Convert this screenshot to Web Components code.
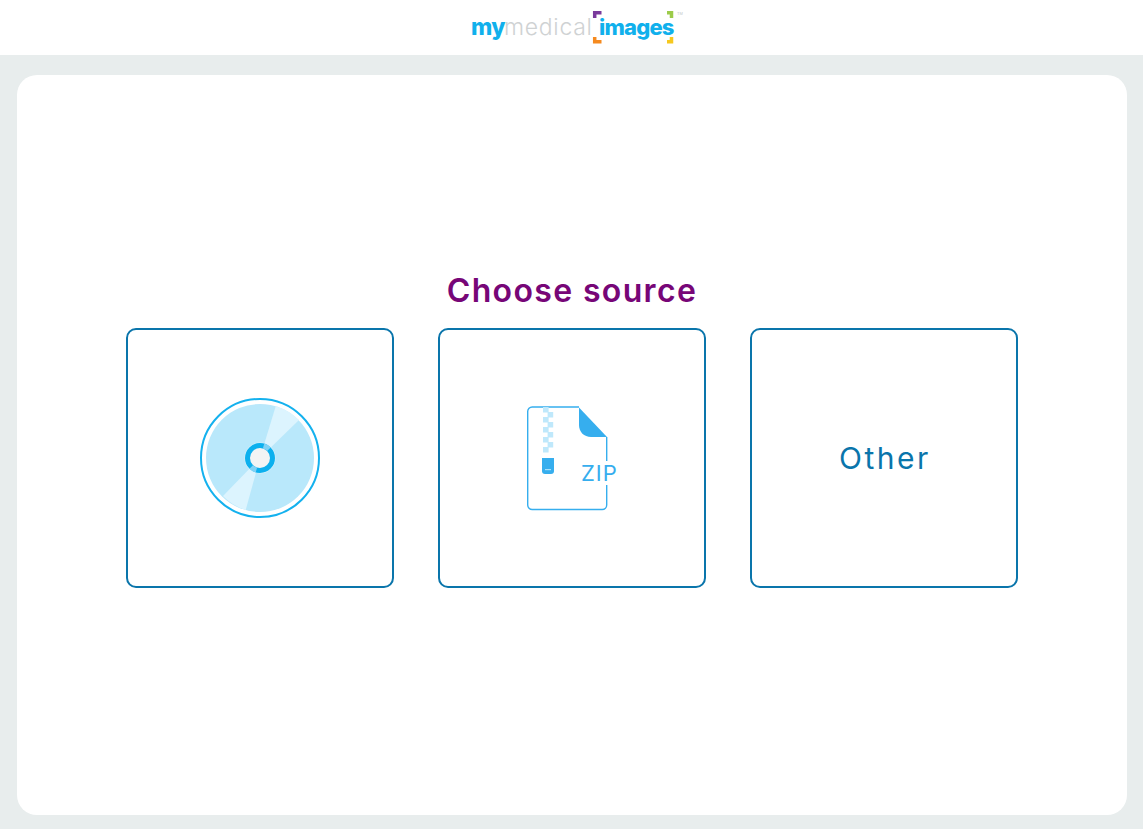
<!DOCTYPE html>
<html>
<head>
<meta charset="utf-8">
<title>Choose source</title>
<style>
  html, body { margin: 0; height: 100%; }
  body { background: #e8eded; font-family: Inter, "Liberation Sans", sans-serif; }
</style>
</head>
<body>
<app-shell>
  <site-logo slot="header"></site-logo>
  <source-panel heading="Choose source">
    <source-tile><disc-icon></disc-icon></source-tile>
    <source-tile><zip-icon></zip-icon></source-tile>
    <source-tile><tile-label>Other</tile-label></source-tile>
  </source-panel>
</app-shell>

<script>
customElements.define('app-shell', class extends HTMLElement {
    constructor() {
        super();
        this.attachShadow({mode: 'open'}).innerHTML = `
            <style>
                :host { display: flex; flex-direction: column; height: 829px; background: #e8eded; }
                header { height: 55px; background: #fff; display: flex; justify-content: center; flex: none; }
                main { flex: 1; display: flex; padding: 20px 16px 14px 17px; min-height: 0; }
            </style>
            <header><slot name="header"></slot></header>
            <main><slot></slot></main>
        `;
    }
});

customElements.define('site-logo', class extends HTMLElement {
    constructor() {
        super();
        this.attachShadow({mode: 'open'}).innerHTML = `
            <style>
                :host { display: block; position: relative; width: 219px; height: 55px; }
                .word { display: flex; align-items: baseline; padding: 13px 0 0 9px; font: 23px/28px Inter, sans-serif; }
                .my { color: #10b0ec; font-weight: 800; width: 33px; letter-spacing: -0.6px; }
                .medical { color: #cfd2d3; font-weight: 300; width: 87px; letter-spacing: 0.7px; }
                .images { color: #10b0ec; font-weight: 800; font-size: 22px; margin-left: 8px; letter-spacing: -0.8px; }
                svg { position: absolute; left: 0; top: 0; }
                .tm { position: absolute; left: 215px; top: 11px; font: 4px/5px "Liberation Sans", sans-serif; color: #c4c8c8; }
            </style>
            <div class="word"><span class="my">my</span><span class="medical">medical</span><span class="images">images</span></div>
            <svg width="219" height="55" viewBox="0 0 219 55" fill="none" stroke-width="3.5">
                <path d="M132.700 18V12.800H139.500" stroke="#7a3a9c"/>
                <path d="M205 12.800H209.500V18" stroke="#9ccb4a"/>
                <path d="M132.700 37V41.700H139.500" stroke="#f58a1f"/>
                <path d="M205 41.700H209.500V37" stroke="#f6c81e"/>
            </svg>
            <span class="tm">TM</span>
        `;
    }
});

customElements.define('source-panel', class extends HTMLElement {
    constructor() {
        super();
        this.attachShadow({mode: 'open'}).innerHTML = `
            <style>
                :host { display: flex; flex: 1; flex-direction: column; align-items: center; justify-content: center;
                        background: #fff; border-radius: 20px; padding-bottom: 30px; }
                h1 { margin: 0 0 19px; font: 600 32px/37px Inter, sans-serif; letter-spacing: 1.35px; color: #770677; text-align: center; }
                .tiles { display: grid; grid-template-columns: repeat(3, 268px); gap: 44px; }
            </style>
            <h1></h1>
            <div class="tiles"><slot></slot></div>
        `;
        this.shadowRoot.querySelector('h1').textContent = this.getAttribute('heading');
    }
});

customElements.define('source-tile', class extends HTMLElement {
    constructor() {
        super();
        this.attachShadow({mode: 'open'}).innerHTML = `
            <style>
                :host { display: flex; align-items: center; justify-content: center; box-sizing: border-box; height: 260px;
                        border: 2px solid #0a75ab; border-radius: 10px; background: #fff; cursor: pointer;
                        font: 400 30px/36px Inter, sans-serif; letter-spacing: 2.5px; color: #0a75ab; }
            </style>
            <slot></slot>
        `;
    }
});

customElements.define('tile-label', class extends HTMLElement {
    constructor() {
        super();
        this.attachShadow({mode: 'open'}).innerHTML = `
            <style>:host { display: block; margin: -1px 0 0 2px; }</style>
            <slot></slot>
        `;
    }
});

customElements.define('disc-icon', class extends HTMLElement {
    constructor() {
        super();
        this.attachShadow({mode: 'open'}).innerHTML = `
            <style>:host { display: block; width: 120px; height: 120px; } svg { display: block; }</style>
            <svg width="120" height="120" viewBox="0 0 120 120">
                <circle cx="60" cy="60" r="59" fill="#fff" stroke="#14b1ee" stroke-width="2"/>
                <circle cx="60" cy="60" r="54" fill="#b9e8fb"/>
                <path d="M60 60L75.700 8.300A54 54 0 0 1 99 22Z" fill="#dcf4fe"/>
                <path d="M60 60L23 98A54 54 0 0 0 45.700 112Z" fill="#dcf4fe"/>
                <circle cx="60" cy="60" r="15.500" fill="#d5f0fb"/>
                <circle cx="60" cy="60" r="12.500" fill="#f2f4f4" stroke="#0cb0ee" stroke-width="5"/>
                <path d="M63.600 48A12.500 12.500 0 0 1 68.900 51.200M51.200 68.900A12.500 12.500 0 0 0 56.400 72" fill="none" stroke="#7fd2f5" stroke-width="5"/>
            </svg>
        `;
    }
});

customElements.define('zip-icon', class extends HTMLElement {
    constructor() {
        super();
        this.attachShadow({mode: 'open'}).innerHTML = `
            <style>
                :host { display: block; position: relative; width: 92px; height: 105px; margin-top: 1px; }
                svg { display: block; }
                span { position: absolute; left: 54px; top: 55px; padding: 0 1px; background: #fff;
                       font: 400 22px/24px Inter, sans-serif; letter-spacing: 1px; color: #36aeee; }
            </style>
            <svg width="92" height="105" viewBox="0 0 92 105" fill="none">
                <path d="M53 1H6.200a4.500 4.500 0 0 0-4.500 4.500V99a4.500 4.500 0 0 0 4.500 4.500H76.200a4.500 4.500 0 0 0 4.500-4.500V31" stroke="#36aeee" stroke-width="1.400"/>
                <path d="M53 1.500L81 31H65C58 31 53 26 53 19Z" fill="#36aeee"/>
                <g fill="#bfe8fb">
                    <rect x="17" y="1" width="5.600" height="5.500"/><rect x="21.600" y="6" width="5.600" height="5.500"/>
                    <rect x="17" y="11" width="5.600" height="5.500"/><rect x="21.600" y="16" width="5.600" height="5.500"/>
                    <rect x="17" y="21" width="5.600" height="5.500"/><rect x="21.600" y="26" width="5.600" height="5.500"/>
                    <rect x="17" y="31" width="5.600" height="5.500"/><rect x="21.600" y="36" width="5.600" height="5.500"/>
                    <rect x="17" y="41" width="5.600" height="5.500"/>
                </g>
                <path d="M16 52H28V65a3 3 0 0 1-3 3H19a3 3 0 0 1-3-3Z" fill="#36aeee"/>
                <rect x="19" y="63" width="6" height="1.200" fill="#a9dff8"/>
            </svg>
            <span>ZIP</span>
        `;
    }
});
</script>
</body>
</html>
